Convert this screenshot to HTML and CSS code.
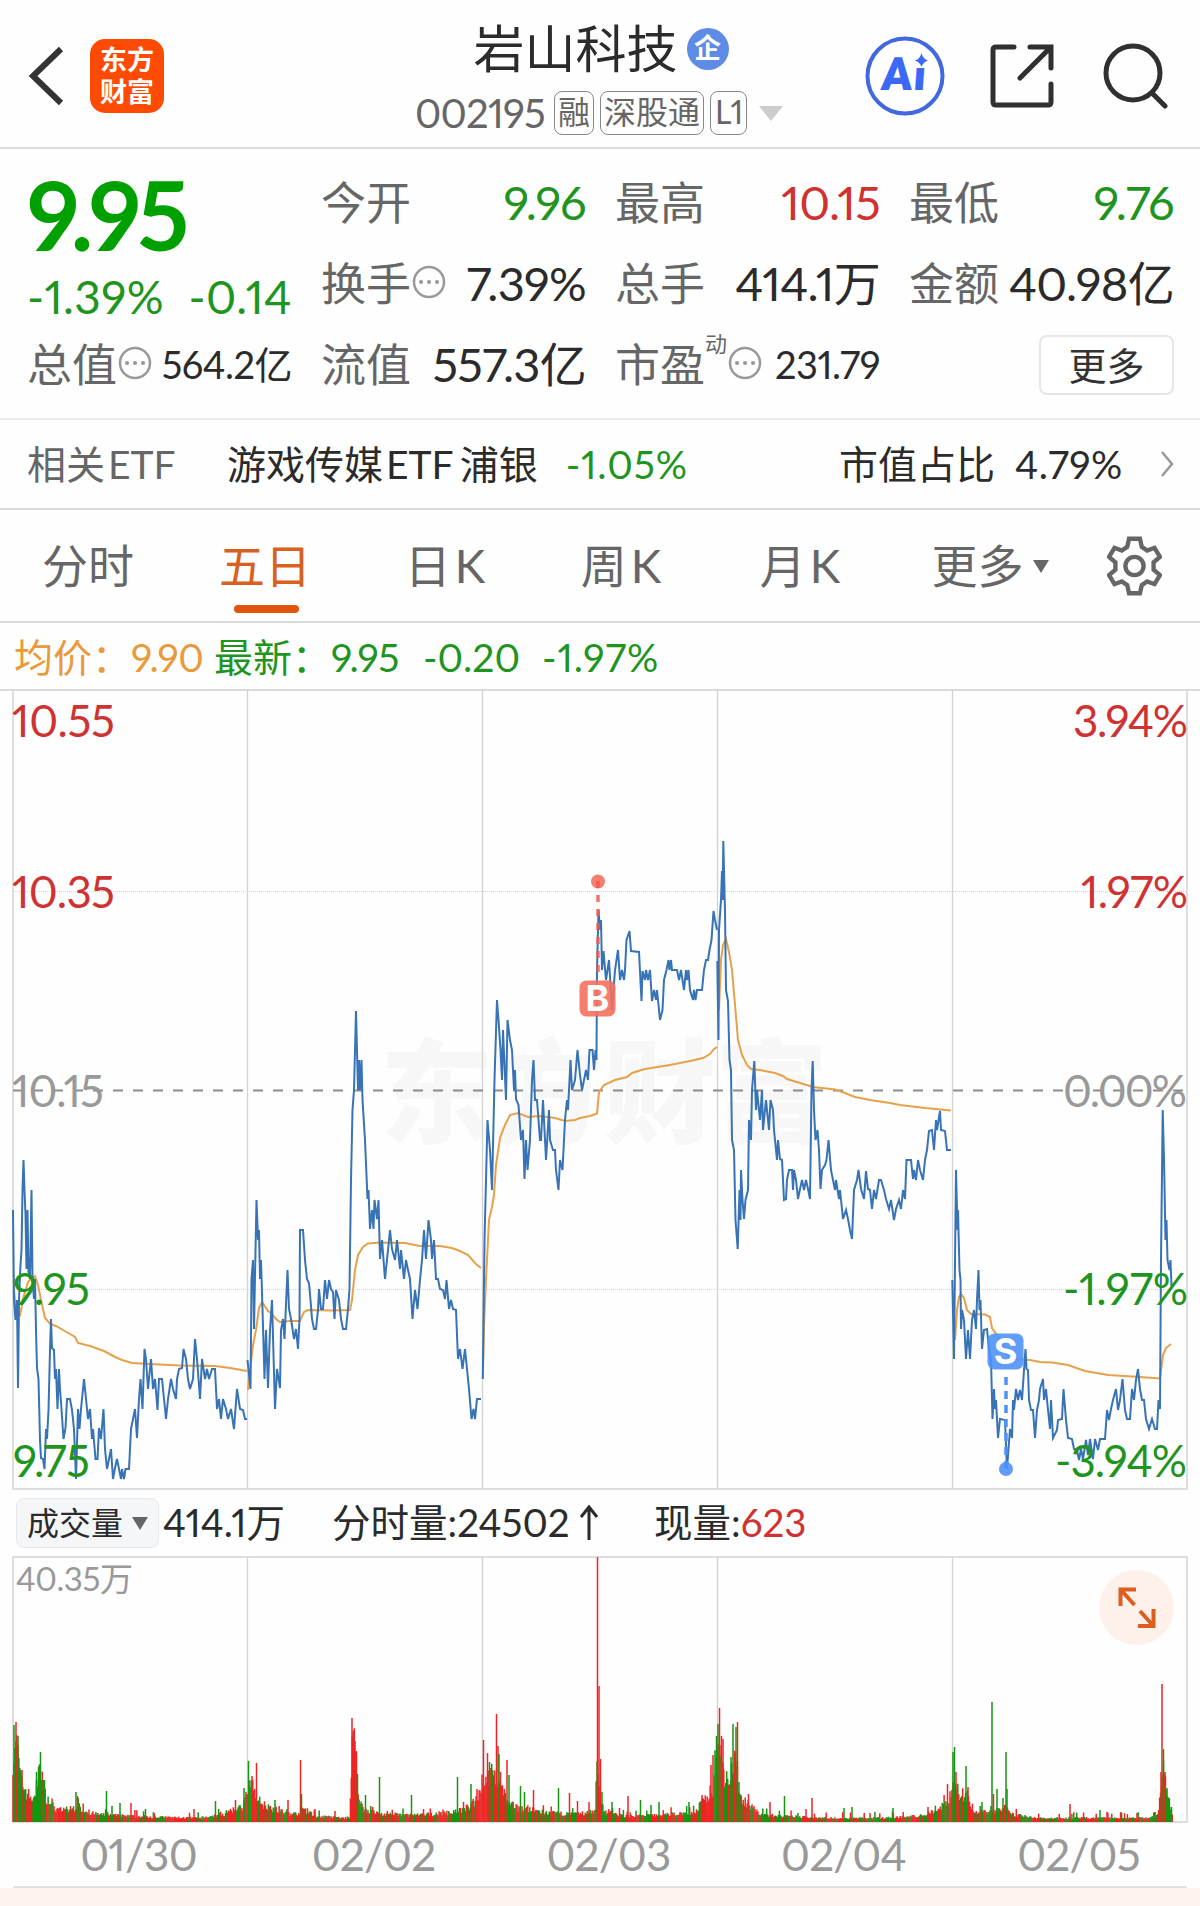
FILE: index.html
```html
<!DOCTYPE html>
<html lang="zh-CN">
<head>
    <meta charset="utf-8" />
    <title>岩山科技 002195</title>
    <link rel="stylesheet" href="styles.css">
</head>
<body>
    <header class="header">
        <div class="header-left">
            <svg class="back" width="40" height="64" viewBox="0 0 40 64">
                <path d="M36 5 L8 32 L36 59" />
            </svg>
            <div class="logo"><span>东方</span><span>财富</span></div>
        </div>
        <div class="header-title">
            <div class="name">岩山科技<span class="corp">企</span></div>
            <div class="code">
                <span class="code-num">002195</span>
                <span class="tag">融</span>
                <span class="tag">深股通</span>
                <span class="tag tag-l1">L1</span>
                <i class="arrow arrow-light"></i>
            </div>
        </div>
        <div class="header-right">
            <svg class="ai" width="80" height="80" viewBox="0 0 80 80">
                <circle cx="40" cy="40" r="37.5" />
                <text x="19" y="54.500" textLength="45" transform="skewX(-4)">Ai</text>
                <path class="star-gap" d="M48 16H66V32H48Z" />
                <path d="M56.500 17 Q58 23 63 24.500 Q58 26 56.500 31 Q55 26 50 24.500 Q55 23 56.500 17Z" />
            </svg>
            <svg class="icon share" width="64" height="64" viewBox="0 0 64 64">
                <path d="M24 3 H6 Q3 3 3 6 V58 Q3 61 6 61 H58 Q61 61 61 58 V40" />
                <path d="M40 3 H61 V24 M61 3 L30 34" />
            </svg>
            <svg class="icon search" width="66" height="66" viewBox="0 0 66 66">
                <circle cx="30" cy="30" r="27" />
                <path d="M49 50 L62 63" />
            </svg>
        </div>
    </header>

    <section class="quote">
        <div class="col">
            <div class="price">9.95</div>
            <div class="change green"><span>-1.39%</span><span>-0.14</span></div>
            <div class="row">
                <label>总值</label>
                <svg class="info" viewBox="0 0 34 34"><circle cx="17" cy="17" r="15" /><path d="M9 17h.1M17 17h.1M25 17h.1" /></svg>
                <span class="value small">564.2亿</span>
            </div>
        </div>
        <div class="col">
            <div class="row"><label>今开</label><span class="value green">9.96</span></div>
            <div class="row">
                <label>换手</label>
                <svg class="info" viewBox="0 0 34 34"><circle cx="17" cy="17" r="15" /><path d="M9 17h.1M17 17h.1M25 17h.1" /></svg>
                <span class="value">7.39%</span>
            </div>
            <div class="row"><label>流值</label><span class="value">557.3亿</span></div>
        </div>
        <div class="col">
            <div class="row"><label>最高</label><span class="value red">10.15</span></div>
            <div class="row"><label>总手</label><span class="value">414.1万</span></div>
            <div class="row">
                <label>市盈</label><sup>动</sup>
                <svg class="info" viewBox="0 0 34 34"><circle cx="17" cy="17" r="15" /><path d="M9 17h.1M17 17h.1M25 17h.1" /></svg>
                <span class="value small">231.79</span>
            </div>
        </div>
        <div class="col">
            <div class="row"><label>最低</label><span class="value green">9.76</span></div>
            <div class="row"><label>金额</label><span class="value">40.98亿</span></div>
            <div class="row"><button class="more">更多</button></div>
        </div>
    </section>

    <section class="etf">
        <span class="etf-label">相关<b>ETF</b></span>
        <span class="etf-name">游戏传媒<b>ETF</b>浦银</span>
        <span class="etf-change green">-1.05%</span>
        <span class="etf-share">市值占比</span>
        <span class="etf-rate">4.79%</span>
        <svg class="chevron" width="14" height="28" viewBox="0 0 14 28"><path d="M2 2 L12 14 L2 26" /></svg>
    </section>

    <nav class="tabs">
        <a>分时</a>
        <a class="active">五日</a>
        <a>日<span>K</span></a>
        <a>周<span>K</span></a>
        <a>月<span>K</span></a>
        <a>更多<i class="arrow"></i></a>
        <svg class="gear" width="55" height="60" viewBox="0 0 60 66">
            <path d="M24 3 H36 L38 12 L44 16 L52 13 L58 23 L51 29 V37 L58 43 L52 53 L44 50 L38 54 L36 63 H24 L22 54 L16 50 L8 53 L2 43 L9 37 V29 L2 23 L8 13 L16 16 L22 12 Z" />
            <circle cx="30" cy="33" r="10" />
        </svg>
    </nav>

    <div class="legend">
        <span class="orange">均价：</span><span class="num orange">9.90</span>
        <span class="latest green">最新：</span><span class="num green">9.95</span>
        <span class="diff green">-0.20</span>
        <span class="pct green">-1.97%</span>
    </div>

    <svg class="chart" width="1200" height="800" viewBox="0 690 1200 800">
        <text class="watermark" x="380" y="1134" textLength="448">东方财富</text>

        <path class="frame" d="M13 690 V1489 H1187 V690" />
        <path class="day" d="M247.500 690V1488M482.500 690V1488M717.500 690V1488M952.500 690V1488" />
        <path class="dots" d="M13 891.500H1187M13 1289.500H1187" />
        <path class="base" d="M13 1090.500H1187" />

        <!-- average price -->
        <g class="avg">
            <polyline points="14,1290 16,1310 20,1315 24,1295 28,1282 32,1278 35,1276 38,1285 41,1300 45,1318 50,1324 56,1326 63,1330 70,1334 75,1337 78,1343 90,1346 104,1351 115,1357 122,1360 132,1363 150,1364 180,1365.500 215,1366 230,1368 247,1371" />
            <polyline points="248,1390 250,1370 253,1345 256,1330 259,1308 262,1302 268,1311 272,1314 276,1319 280,1322 290,1321 300,1321 304,1312 308,1310 330,1310.500 350,1310 352,1300 355,1270 358,1255 363,1247 368,1243.500 380,1242.500 405,1243 420,1246 440,1246 452,1248 460,1251 468,1255 476,1264 481,1268" />
            <polyline points="483,1370 484,1325 486,1280 489,1220 492,1207 494,1195 496,1165 500,1138 505,1125 510,1115 518,1113 528,1117 540,1116 555,1118 565,1121 575,1120 580,1118 590,1116 597,1113.500 599,1092 604,1085 615,1080 627,1077 632,1073 645,1069 670,1065 690,1061 703,1058 710,1054 714,1049 717,1047" />
            <polyline points="719,1010 721,960 723,945 726,939 729,952 732,970 735,1005 738,1040 742,1055 747,1065 751,1069 760,1070 775,1073 783,1076 787,1079 800,1083 813,1087 835,1089.500 845,1093 855,1097 870,1100 890,1103 900,1105 925,1108 951,1110.500" />
            <polyline points="955,1340 957,1310 959,1297 961,1294 964,1298 967,1310 971,1314 985,1314.500 990,1317 992,1328 997,1335 1003,1345 1008,1357 1014,1359 1030,1360 1040,1362 1052,1362.500 1068,1365 1085,1371 1108,1375 1140,1377 1160,1378.500 1163,1355 1166,1348 1171,1344" />
        </g>

        <!-- latest price -->
        <g class="line">
            <polyline points="13,1210 14,1300 15.500,1320 17,1300 18,1388 19,1300 20.500,1265 21.500,1250 22.500,1190 23.500,1160 24.500,1190 25.500,1215 26.500,1269 27.500,1210 28.500,1272 30,1279 31.500,1190 32.500,1279 34,1299 35,1279 36,1330 37,1368 38.500,1379 40,1440 41,1458 43,1459 44.500,1469 46,1429 47,1439 48.500,1410 50,1350 51,1319 52,1348 54,1350 55,1379 56,1369 57.500,1409 59,1369 60,1389 61.500,1409 63.500,1439 65.500,1428 67,1399 70,1399 72,1410 74,1429 76,1479 78,1409 79.500,1429 81,1409 83,1389 84,1379 86,1399 88,1419 90,1409 92,1439 93,1429 95.500,1459 97.500,1459 99,1428 101,1439 103.500,1409 105,1449 107,1469 109,1459 111,1449 113,1479 115,1468 117,1459 119,1469 121,1479 122,1469 124,1479 125.500,1469 129,1469 131,1429 133,1419 135,1409 137,1438 139,1399 140.500,1379 142.500,1409 144.500,1349 146,1359 148,1389 151,1359 153,1389 155,1379 157.500,1410 159,1379 162,1379 164,1399 166,1419 168,1399 171,1379 173,1389 176,1399 177,1379 179,1369 182,1368 183.500,1349 186,1359 188,1379 190,1389 193,1379 195,1339 197,1359 200,1399 202,1359 205,1379 207,1369 209,1379 212,1369 215,1369 217,1409 219,1399 221,1419 223,1399 226,1409 228,1419 231,1409 234,1429 237,1389 240,1409 243,1410 245,1419 247,1419" />
            <polyline points="247.500,1360 250.500,1389 251.500,1279 253,1260 254,1329 256.500,1200 258,1240 259,1230 260,1279 261,1260 262.500,1309 264.500,1379 266,1330 268,1388 270,1330 272,1300 275,1409 277,1369 280,1388 281,1330 283,1319 284.500,1339 287.500,1270 289,1309 291,1319 294,1339 296,1329 298,1349 299.500,1319 300,1230 303,1230 305,1260 307,1279 309,1283 310.500,1300 312,1319 314,1329 316,1329 318,1310 319,1289 321,1309 323,1309 325,1280 327,1299 329,1280 331,1289 333,1292 334.500,1319 336,1290 339,1300 341,1319 343,1329 346,1329 348,1309 349.500,1289 351,1180 352.500,1110 354,1090 356,1011 358,1090 359,1060 360,1090 361.500,1060 362.500,1100 365,1140 367.500,1199 368.500,1190 370,1229 372,1210 373.500,1229 374.500,1200 377,1219 378.500,1200 380,1259 382,1240 385,1279 388,1250 390,1230 392,1249 395,1260 397,1240 400,1269 401,1250 404,1279 406,1260 408,1270 410,1279 412.500,1319 415,1290 417.500,1309 420,1280 422,1260 424,1230 426,1259 428.500,1220 431,1240 432,1259 434,1240 436,1279 438,1279 440,1289 443,1290 445,1299 446.500,1280 449,1309 451,1300 453,1309 456,1310 458,1359 460,1349 462.500,1369 465,1349 467,1369 469,1389 471.500,1419 473.500,1409 475,1419 477,1399 481,1399" />
            <polyline points="482.800,1379 484.500,1240 487.500,1120 490,1150 492,1190 494.500,1080 497,1000 498.500,1020 500.500,1050 502,1080 503,1030 506,1100 507.500,1020 510,1040 512,1050 514,1090 515,1070 516,1099 518.500,1105 521,1140 523,1130 524.500,1179 526,1140 527.500,1170 530,1140 532,1080 533.500,1060 535,1100 537,1100 540,1140 541,1140 543,1100 546,1160 549,1110 550,1140 553,1150 555,1150 556,1170 558.500,1190 560,1160 562.500,1170 565,1120 567,1100 568,1110 570.500,1060 572,1090 575,1080 577.500,1050 580,1075 582,1090 586,1070 588,1080 589.500,1050 592.500,1050 594,1070 595.500,1050 596.500,1060 597,970 598.500,910 600,930 601,920 602,970 603.500,951 606,980 609,960 612,1010 615,970 618,950 620,980 622,970 624,980 625,970 626.500,940 629.500,931 631,951 639,952 641.500,1001 642.500,971 645,980 646,970 648,980 650,970 652,1001 654,990 656,1000 657,990 660,1020 662.500,1010 664,980 666.500,970 668.500,960 669.500,970 671,960 672,970 677,970 679,980 681,970 684,990 686,970 687,980 688.500,970 690,990 693,1000 694,990 695.500,1000 697,990 702,990 704,970 706,960 708,960 709.500,950 711.500,940 713.500,911 715,920 717,930" />
            <polyline points="717.300,961 718.500,1040 719,930 721,900 722,871 722.700,900 723.300,841 725,911 726,990 728,1001 729.500,1060 731,1070 732,1140 734,1150 735.500,1220 737.700,1249 739.500,1190 740.500,1220 741,1170 742.500,1200 744,1219 745.500,1200 748,1190 749,1120 751,1140 752,1090 754.300,1061 756,1110 757,1090 760,1120 762,1090 763,1130 766,1100 769,1130 770.500,1100 773,1110 774,1130 777,1160 778,1140 780,1159 782,1160 784,1200 786,1199 787,1180 789,1170 792,1170 793,1190 794,1170 796,1180 798,1199 800,1189 802,1180 804,1190 806,1180 808,1189 810,1199 811.500,1090 812.700,1061 814,1110 815.500,1140 817.500,1130 819,1150 820.500,1189 822,1170 825,1165 826.500,1160 828.500,1140 831,1170 833,1180 835,1190 836,1180 839,1199 840,1190 843,1219 846,1210 848,1219 850,1230 852,1239 854,1190 857,1180 858.500,1170 861,1189 864,1199 866,1171 868,1189 870,1190 872,1209 874,1190 876,1199 879,1180 881,1180 884,1190 886,1199 889,1209 891,1200 894,1220 896,1209 899,1200 901,1209 903,1190 905,1199 906.500,1160 911,1160 913,1179 914,1170 916,1180 918,1160 920,1170 923,1180 925,1160 927,1150 929,1131 932,1130 934,1150 936,1120 937,1130 940,1111 941,1130 945,1131 947,1150 949,1150 951,1150" />
            <polyline points="952.300,1280 954,1359 956,1170 957.500,1230 958,1210 959.500,1270 960.500,1280 961,1329 962,1310 964,1320 966,1359 968,1330 970,1359 972,1320 974,1310 976,1329 977,1300 978.500,1270 979.500,1310 980.500,1300 982,1349 984,1330 987,1329 989,1349 991,1360 992.500,1419 994,1389 995,1409 996,1400 998,1438 1000,1419 1005,1420 1007,1469 1010,1429 1012,1438 1013,1400 1014,1410 1016,1389 1018,1400 1020,1390 1022,1400 1024,1370 1025.500,1349 1026.500,1369 1028,1370 1029,1400 1031,1410 1033,1410 1035,1438 1037,1410 1039,1400 1040,1389 1043,1379 1044,1400 1046,1389 1048,1410 1050,1429 1051,1400 1053,1438 1057,1430 1058,1420 1062,1419 1063.500,1389 1066,1420 1068,1438 1072,1439 1074,1449 1077,1450 1079,1460 1081,1449 1083,1459 1086,1440 1088,1455 1090,1439 1093,1459 1095,1439 1098,1450 1100,1439 1105,1439 1107,1410 1109,1420 1111,1409 1113,1400 1116,1389 1118,1410 1120,1400 1122.500,1379 1125,1410 1127,1419 1130,1419 1132,1389 1134,1400 1136,1380 1138,1369 1140,1389 1142,1400 1144,1400 1146,1419 1149,1429 1152,1419 1155,1429 1157,1429 1158.500,1400 1160,1409 1161,1260 1162.700,1110 1164,1160 1165.500,1240 1166.500,1220 1167.500,1260 1169.500,1270 1170.500,1260 1171.500,1286" />
        </g>

        <!-- buy and sell marks -->
        <g class="buy">
            <circle cx="598" cy="881.500" r="7" />
            <path d="M598 881 V974" />
            <rect x="579.500" y="980.500" width="36" height="36" rx="7" />
            <text x="597.500" y="1010.500">B</text>
        </g>
        <g class="sell">
            <circle cx="1006" cy="1469" r="7" />
            <path d="M1006 1377 V1469" />
            <rect x="987.500" y="1333.500" width="36" height="36" rx="7" />
            <text x="1005.500" y="1364">S</text>
        </g>

        <g class="axis">
            <text class="up" x="12" y="737" textLength="103">10.55</text>
            <text class="up" x="12" y="908" textLength="103">10.35</text>
            <text class="flat" x="12" y="1107" textLength="92">10.15</text>
            <text class="down" x="13" y="1305" textLength="77">9.95</text>
            <text class="down" x="13" y="1477" textLength="77">9.75</text>
            <text class="up" x="1073" y="737" textLength="115">3.94%</text>
            <text class="up" x="1081" y="908" textLength="107">1.97%</text>
            <text class="flat" x="1063" y="1107" textLength="124">0.00%</text>
            <text class="down" x="1063" y="1305" textLength="125">-1.97%</text>
            <text class="down" x="1055" y="1477" textLength="132">-3.94%</text>
        </g>
    </svg>

    <div class="volume-head">
        <div class="picker">成交量<i class="arrow"></i></div>
        <span class="total">414.1万</span>
        <span class="minute">分时量:24502<svg width="20" height="38" viewBox="0 0 20 38"><path d="M10 36 V3 M2 13 L10 3 L18 13" /></svg></span>
        <span>现量:<em class="red">623</em></span>
    </div>

    <div class="volume">
        <svg class="volume-chart" width="1200" height="267" viewBox="0 1556 1200 267">
            <path class="day" d="M247.500 1557V1822M482.500 1557V1822M717.500 1557V1822M952.500 1557V1822" />
            <rect class="box" x="13" y="1557" width="1174" height="265" />
            <g id="bars"></g>
            <text class="max" x="16" y="1591" textLength="117">40.35万</text>
        </svg>
        <div class="expand">
            <svg width="38" height="42" viewBox="0 0 38 42">
                <path d="M2.500 19 V2.500 H18 M3 3 L16.500 18 M35.500 22 V39 H20 M35 38.500 L22 24" />
            </svg>
        </div>
    </div>

    <div class="dates">
        <span>01/30</span><span>02/02</span><span>02/03</span><span>02/04</span><span>02/05</span>
    </div>
    <div class="bottom"></div>

    <script>
        // outline of the volume: x, height
        var outline = [
            [13, 60], [15, 85], [18, 70], [20, 45], [23, 38], [28, 28], [35, 22], [38, 48], [42, 50], [45, 28], [50, 20], [57, 12], [68, 12], [78, 16], [90, 9], [105, 7],
            [130, 6], [160, 5], [200, 4], [225, 8], [236, 13], [242, 15], [247, 28], [252, 38], [258, 22], [270, 15], [285, 9], [298, 8], [303, 14], [315, 6],
            [345, 4], [350, 5], [352, 90], [355, 75], [358, 25], [364, 13], [380, 8], [420, 7], [455, 10], [470, 15], [478, 28], [484, 45],
            [492, 45], [500, 42], [508, 18], [520, 14], [550, 9], [575, 8], [595, 10], [597, 60], [600, 28], [604, 11], [625, 6], [660, 7], [695, 10],
            [706, 24], [713, 32], [717, 90], [721, 65], [726, 45], [736, 60], [740, 28], [748, 18], [760, 8], [780, 6], [830, 4],
            [880, 4], [920, 6], [938, 13], [947, 20], [952, 35], [957, 32], [966, 28], [975, 10], [990, 11], [1002, 12], [1008, 18], [1012, 8],
            [1035, 4], [1060, 4], [1100, 4], [1150, 4], [1158, 7], [1161, 45], [1164, 62], [1167, 28], [1172, 10], [1173, 4]
        ];

        // single high bars: x, height, colour
        var peaks = [
            [14, 97, 'g'], [16, 100, 'r'], [18, 86, 'g'], [22, 52, 'r'], [36.500, 50, 'g'], [38.500, 55, 'g'], [40.500, 70, 'g'], [44.500, 42, 'g'], [76, 30, 'g'], [77.500, 26, 'r'],
            [106.500, 31, 'g'], [112, 16, 'g'], [120, 19, 'g'], [131, 19, 'r'], [145.500, 13, 'g'], [194, 13, 'r'], [215.500, 21, 'g'], [235.500, 22, 'r'], [244, 34, 'g'],
            [248.500, 61, 'g'], [252, 46, 'r'], [256.500, 59, 'r'], [275, 22, 'g'], [288, 22, 'r'], [300.500, 62, 'r'], [301.500, 28, 'g'], [315, 13, 'r'], [335, 11, 'r'],
            [352, 104, 'r'], [353.500, 87, 'r'], [355, 81, 'r'], [356.500, 71, 'r'], [357.500, 48, 'g'], [365.500, 27, 'g'], [379.500, 45, 'g'], [411.500, 27, 'g'], [423.500, 13, 'r'],
            [457.500, 45, 'g'], [471, 38, 'g'], [477, 33, 'r'], [483.500, 82, 'r'], [487.500, 69, 'r'], [489.500, 60, 'g'], [496.500, 108, 'r'], [498, 76, 'r'], [499, 68, 'g'],
            [507, 62, 'r'], [509, 47, 'g'], [520.500, 36, 'g'], [524.500, 30, 'g'], [533.500, 32, 'r'], [558.500, 34, 'g'], [569.500, 29, 'r'], [577.500, 21, 'r'], [589, 20, 'r'],
            [597.500, 265, 'r'], [599, 136, 'r'], [600.500, 63, 'r'], [602, 30, 'g'], [612, 20, 'g'], [628, 26, 'r'], [640.500, 22, 'g'], [651, 17, 'g'], [659, 20, 'g'],
            [689, 20, 'g'], [702, 27, 'r'], [711, 57, 'r'], [713, 67, 'r'], [716.500, 86, 'g'], [718, 98, 'g'], [719.500, 114, 'r'], [721.500, 86, 'r'], [723, 83, 'r'],
            [731, 65, 'g'], [733, 98, 'g'], [736, 95, 'g'], [737.500, 100, 'r'], [739, 40, 'g'], [748.500, 28, 'r'], [770, 20, 'r'], [784.500, 26, 'g'], [806, 13, 'r'],
            [812, 24, 'r'], [844, 14, 'g'], [852, 15, 'g'], [893, 14, 'g'], [928, 15, 'r'], [947.500, 38, 'r'], [953, 70, 'g'], [954.500, 75, 'g'], [956, 50, 'r'],
            [966, 56, 'g'], [968, 35, 'r'], [982, 20, 'g'], [992, 120, 'g'], [993.500, 28, 'r'], [997, 33, 'g'], [1003, 24, 'g'], [1006, 70, 'g'], [1007, 33, 'g'],
            [1070, 18, 'r'], [1100, 12, 'g'], [1107, 10, 'r'], [1137, 9, 'r'], [1155, 10, 'g'],
            [1161, 50, 'r'], [1162, 138, 'r'], [1163.500, 73, 'g'], [1165, 50, 'r'], [1167, 34, 'g'], [1169, 20, 'g'], [1171.500, 15, 'g']
        ];

        var seed = 7;
        function rand() {
            seed = (seed * 16807) % 2147483647;
            return seed / 2147483647;
        }

        function heightAt(x) {
            for (var i = 1; i < outline.length; i++) {
                if (x <= outline[i][0]) {
                    var a = outline[i - 1], b = outline[i];
                    return a[1] + (b[1] - a[1]) * (x - a[0]) / (b[0] - a[0]);
                }
            }
            return 3;
        }

        var svg = '';
        function bar(x, h, colour) {
            svg += '<path class="' + colour + '" d="M' + x.toFixed(1) + ' 1822v-' + h.toFixed(1) + '"/>';
        }

        for (var x = 13; x < 1173; x += 0.975) {
            var rising = (x > 700 && x < 715) || (x > 350 && x < 357) || (x > 476 && x < 488);
            var h = heightAt(x) * (0.7 + rand() * 0.55) + (rand() > 0.9 ? 5 : 0);
            bar(x, h, rand() < (rising ? 0.95 : 0.6) ? 'r' : 'g');
        }
        peaks.forEach(function (p) { bar(p[0], p[1], p[2]); });
        document.getElementById('bars').innerHTML = svg;
    </script>
</body>
</html>
```
FILE: styles.css
```css
* {
    box-sizing: border-box;
}

body {
    margin: 0;
    width: 1200px;
    background: #fefefe;
    color: #2b2b2b;
    font-family: Lato, "Noto Sans CJK SC", sans-serif;
    font-size: 38px;
    font-variant-numeric: proportional-nums;
}

.green { color: #1f951f; }
.red { color: #cf3232; }
.orange { color: #e89a3c; }

/* header */
.header {
    display: grid;
    grid-template-columns: 360px 478px 1fr;
    height: 149px;
    border-bottom: 2px solid #dcdcdc;
}

.header-left {
    display: flex;
    align-items: center;
    padding: 4px 0 0 25px;
}

.back {
    fill: none;
    stroke: #333;
    stroke-width: 6;
}

.logo {
    display: flex;
    flex-direction: column;
    justify-content: center;
    align-items: center;
    width: 74px;
    height: 74px;
    margin-left: 25px;
    border-radius: 15px;
    background: #ff4a04;
    color: #fff;
    font-size: 27px;
    font-weight: bold;
    line-height: 32px;
}

.header-title {
    padding-top: 16px;
}

.name {
    display: flex;
    justify-content: center;
    align-items: center;
    height: 66px;
    padding-left: 4px;
    font-size: 51px;
    line-height: 66px;
}

.corp {
    width: 42px;
    height: 42px;
    margin-left: 9px;
    border-radius: 50%;
    background: #5d8be6;
    color: #fff;
    font-size: 27px;
    font-weight: bold;
    line-height: 40px;
    text-align: center;
}

.code {
    display: flex;
    justify-content: center;
    align-items: center;
    gap: 6px;
    height: 62px;
    color: #666;
}

.code-num {
    width: 132px;
    margin-right: 1px;
    font-size: 40px;
    letter-spacing: -.8px;
}

.tag {
    height: 44px;
    padding: 0 3px;
    border: 1.5px solid #888;
    border-radius: 8px;
    font-size: 32px;
    line-height: 39px;
}

.tag-l1 {
    width: 37px;
    padding: 0;
    text-align: center;
    letter-spacing: -1px;
}

.arrow {
    width: 0;
    height: 0;
    border: 8px solid transparent;
    border-top: 13px solid #666;
    border-bottom: 0;
}

.arrow-light {
    margin-left: 6px;
    border-width: 15px 12px 0;
    border-top-color: #ccc;
}

.header-right {
    display: flex;
    align-items: center;
    justify-content: flex-end;
    padding: 4px 31px 0 0;
}

.ai circle {
    fill: #fff;
    stroke: #4268de;
    stroke-width: 4;
}

.ai text {
    fill: #3b68f6;
    font-family: Roboto, sans-serif;
    font-size: 46px;
    font-weight: 900;
}

.ai path { fill: #3b68f6; }
.ai .star-gap { fill: #fff; }

.icon {
    fill: none;
    stroke: #303030;
    stroke-width: 5;
    stroke-linecap: round;
}

.share { margin-left: 45px; }
.search { margin-left: 49px; }

/* quote */
.quote {
    display: grid;
    grid-template-columns: repeat(4, 265px);
    column-gap: 29px;
    height: 271px;
    padding: 13px 27px 0;
    border-bottom: 2px solid #ececec;
}

.row {
    display: flex;
    align-items: center;
    height: 81px;
}

.row label {
    color: #666;
    font-size: 45px;
    line-height: 60px;
    white-space: nowrap;
}

.value {
    margin: -2px 0 0 auto;
    font-size: 47px;
    line-height: 60px;
    letter-spacing: -.7px;
    white-space: nowrap;
}

.value.small {
    font-size: 38px;
    letter-spacing: -.5px;
}

.price {
    height: 104px;
    color: #00a000;
    font-size: 95px;
    font-weight: bold;
    line-height: 104px;
    letter-spacing: -4px;
}

.change {
    display: flex;
    justify-content: space-between;
    height: 58px;
    font-size: 46px;
    line-height: 62px;
    letter-spacing: .4px;
}

.info {
    flex: none;
    width: 34px;
    height: 34px;
    margin: -4px 0 0 1px;
    fill: none;
    stroke: #999;
    stroke-width: 2.5;
}

.info path {
    stroke-width: 4;
    stroke-linecap: round;
}

.row sup {
    align-self: flex-start;
    margin-top: 9px;
    color: #666;
    font-size: 22px;
    line-height: 22px;
}

.more {
    width: 135px;
    height: 60px;
    margin-left: auto;
    padding: 0;
    border: 2px solid #e6e6e6;
    border-radius: 8px;
    background: #fff;
    color: #333;
    font-family: inherit;
    font-size: 38px;
    line-height: 50px;
}

/* related etf */
.etf {
    display: flex;
    align-items: center;
    height: 90px;
    padding: 0 26px 0 27px;
    border-bottom: 2px solid #dadada;
    font-size: 39px;
    line-height: 84px;
    white-space: nowrap;
}

.etf b { font-weight: normal; margin: 0 6px 0 3px; }
.etf-label { width: 200px; color: #666; }
.etf-change { margin-left: 28px; letter-spacing: .9px; }
.etf-share { margin-left: auto; }
.etf-rate { width: 108px; margin-left: 20px; letter-spacing: .5px; }

.chevron {
    margin-left: 37px;
    fill: none;
    stroke: #999;
    stroke-width: 2.5;
}

/* tabs */
.tabs {
    display: grid;
    grid-template-columns: 176px 178px 182px 170px 188px 192px 96px;
    height: 113px;
    border-bottom: 2px solid #dadada;
    color: #666;
    font-size: 46px;
    line-height: 112px;
}

.tabs a {
    display: flex;
    justify-content: center;
    align-items: center;
    position: relative;
}

.tabs a span { margin-left: 4px; }
.tabs .arrow { margin-left: 9px; }
.tabs .active { color: #d9601f; }

.tabs .active::after {
    content: "";
    position: absolute;
    bottom: 9px;
    left: 58px;
    width: 65px;
    height: 8px;
    border-radius: 4px;
    background: #e0560e;
}

.gear {
    align-self: center;
    justify-self: center;
    fill: none;
    stroke: #666;
    stroke-width: 4.8;
}

/* chart */
.legend {
    display: flex;
    height: 68px;
    padding-left: 14px;
    border-bottom: 2px solid #dadada;
    line-height: 69px;
    font-size: 39px;
    white-space: nowrap;
}

.legend .num { width: 83px; letter-spacing: -.6px; }
.legend .diff { margin-left: 9px; width: 119px; letter-spacing: .1px; }
.legend .pct { letter-spacing: .9px; }

.chart {
    display: block;
    margin-top: -1px;
}

.frame, .box {
    fill: none;
    stroke: #dedede;
    stroke-width: 2;
}

.day {
    stroke: #d2d2d2;
    stroke-width: 1.3;
}

.dots {
    stroke: #d4d4d4;
    stroke-width: 1;
    stroke-dasharray: 1 1;
}

.base {
    stroke: #8c8c8c;
    stroke-width: 2;
    stroke-dasharray: 10 10;
}

.avg {
    fill: none;
    stroke: #e6a14a;
    stroke-width: 2;
}

.line {
    fill: none;
    stroke: #3773b5;
    stroke-width: 2;
}

.watermark {
    fill: #f7f7f7;
    font-size: 113px;
    font-weight: 900;
}

.buy, .sell {
    text-anchor: middle;
    font-family: Inter, sans-serif;
    font-size: 36px;
    font-weight: bold;
}

.buy circle, .buy rect { fill: #f4705f; fill-opacity: .9; }
.sell circle, .sell rect { fill: #4e92f7; fill-opacity: .9; }
.buy path { stroke: #ef5b50; stroke-width: 3.5; stroke-dasharray: 7 7; opacity: .85; }
.sell path { stroke: #4e92f7; stroke-width: 3.5; stroke-dasharray: 8 6; }
.buy text, .sell text { fill: #fff; }

.axis { font-size: 44px; }
.up { fill: #cf3232; }
.flat { fill: #999; }
.down { fill: #1f951f; }

/* volume */
.volume-head {
    display: flex;
    align-items: center;
    height: 66px;
    padding-left: 16px;
    font-size: 38.5px;
    line-height: 64px;
    white-space: nowrap;
}

.volume-head > span {
    height: 66px;
}

.picker {
    display: flex;
    align-items: center;
    width: 143px;
    height: 50px;
    padding-left: 10px;
    border: 1.5px solid #e6e8ec;
    border-radius: 8px;
    background: #f5f6f8;
    font-size: 32px;
    line-height: 44px;
}

.picker .arrow { margin-left: 9px; }

.total {
    width: 169px;
    margin-left: 4px;
}

.minute {
    width: 322px;
}

.minute svg {
    margin-left: 9px;
    vertical-align: -5px;
    fill: none;
    stroke: #2b2b2b;
    stroke-width: 3;
}

.volume-head em { font-style: normal; }

.volume {
    position: relative;
    height: 267px;
}

.volume-chart { display: block; }
.volume-chart .r { stroke: #ee2524; }
.volume-chart .g { stroke: #14960f; }
#bars { stroke-width: 1.5; }

.max {
    fill: #999;
    font-size: 33px;
}

.expand {
    display: flex;
    justify-content: center;
    align-items: center;
    position: absolute;
    top: 14px;
    right: 26px;
    width: 75px;
    height: 75px;
    border-radius: 50%;
    background: #fdf1e9;
}

.expand path {
    fill: none;
    stroke: #dc5f20;
    stroke-width: 4;
}

.dates {
    display: flex;
    height: 65px;
    margin: 0 13px;
    padding-left: 8px;
    border-bottom: 2px solid #e2e2e2;
    color: #999;
    font-size: 44px;
    line-height: 63px;
    letter-spacing: -.8px;
}

.dates span {
    width: 235px;
    flex: none;
    text-align: center;
}

.bottom {
    height: 18px;
    background: #fff3ef;
}
```
